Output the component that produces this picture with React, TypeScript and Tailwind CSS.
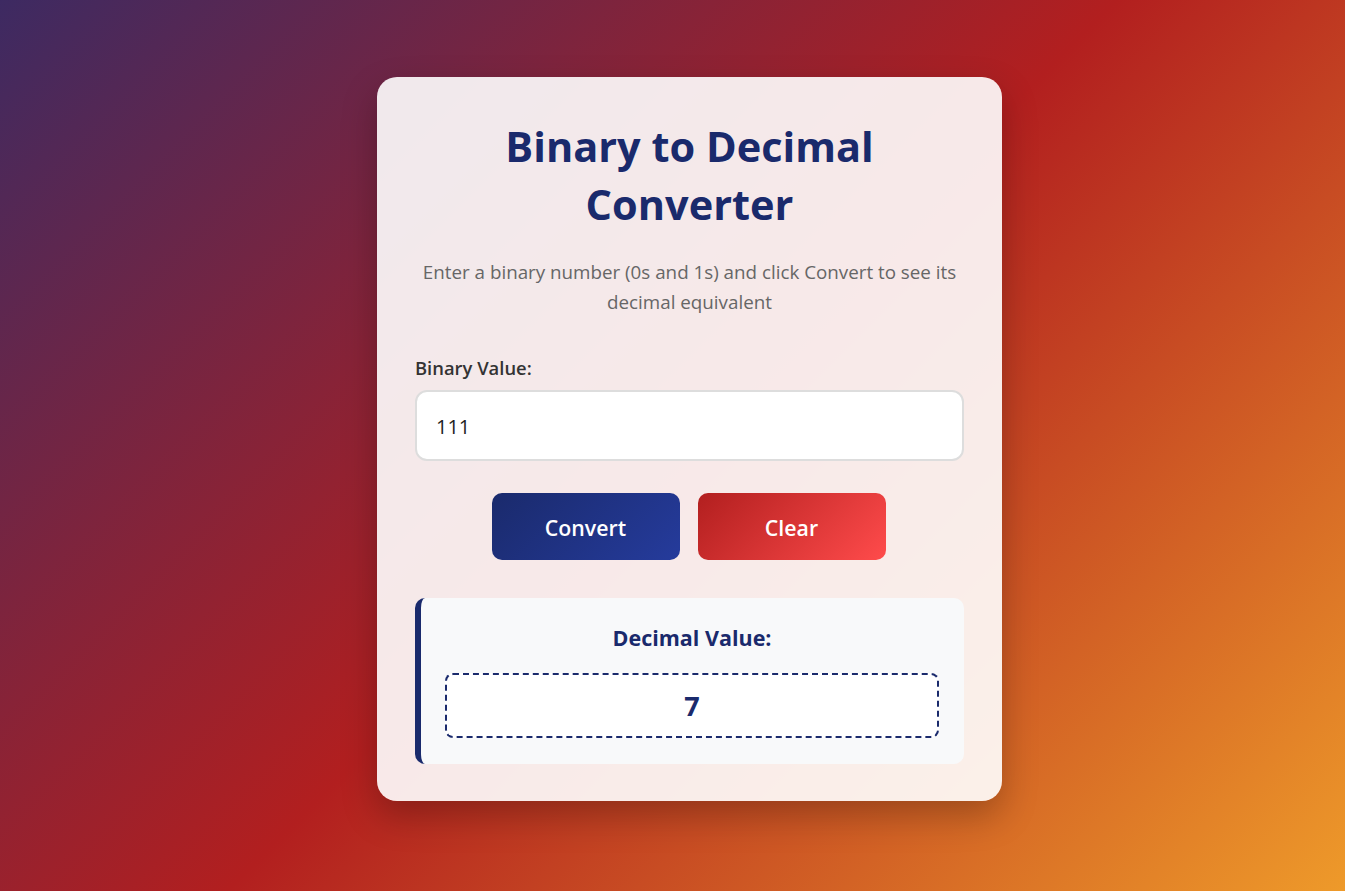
import React, { useState } from "react";

export default function App() {
  const [value, setValue] = useState("111");
  const [result, setResult] = useState("7");

  const convert = () => {
    if (/^[01]+$/.test(value)) setResult(String(parseInt(value, 2)));
    else setResult("Invalid");
  };
  const clear = () => {
    setValue("");
    setResult("");
  };

  return (
    <div
      className="min-h-[891px] w-full bg-[linear-gradient(135deg,#3d2a62_0%,#b21f1f_50%,#ee9a2a_100%)] flex items-start justify-center pt-[77px] pl-[34px]"
      style={{ fontFamily: '"Open Sans", "Noto Sans", sans-serif' }}
    >
      <div className="w-[625px] bg-white/90 rounded-[20px] px-[38px] pt-[40px] pb-[37px] shadow-[0_15px_35px_rgba(0,0,0,0.25)]">
        <h1 className="text-center text-[#1a2a6c] font-bold text-[41.5px] leading-[58px] px-[70px]">
          Binary to Decimal Converter
        </h1>
        <p className="mt-[24px] text-center text-[#666] text-[18.8px] leading-[30px]">
          Enter a binary number (0s and 1s) and click Convert to see its decimal equivalent
        </p>
        <label className="block mt-[37px] text-[#333] font-semibold text-[18.4px] leading-[27px]">
          Binary Value:
        </label>
        <input
          value={value}
          onChange={(e) => setValue(e.target.value)}
          className="mt-[9px] block w-full h-[71px] rounded-[12px] border-2 border-[#ddd] bg-white px-[19px] pt-[2px] text-[20px] text-[#222] outline-none"
        />
        <div className="mt-[32px] flex justify-center gap-[18px] pr-[2px]">
          <button
            onClick={convert}
            className="w-[188px] h-[67px] rounded-[10px] text-white font-semibold text-[21.3px] pt-[2px] bg-[linear-gradient(135deg,#1a2a6c,#253b9c)]"
          >
            Convert
          </button>
          <button
            onClick={clear}
            className="w-[188px] h-[67px] rounded-[10px] text-white font-semibold text-[21.3px] pt-[2px] bg-[linear-gradient(135deg,#b21f1f,#ff4b4b)]"
          >
            Clear
          </button>
        </div>
        <div className="mt-[38px] h-[166px] rounded-[10px] bg-[#f8f9fa] border-l-[6px] border-[#1a2a6c] pl-[24px] pr-[25px] pt-[26px]">
          <h3 className="text-center text-[#1a2a6c] font-bold text-[21.5px] leading-[28px]">
            Decimal Value:
          </h3>
          <div className="mt-[21px] h-[65px] rounded-[8px] border-2 border-dashed border-[#1a2a6c] bg-white flex items-center justify-center pt-[2px] text-[#1a2a6c] font-bold text-[27px]">
            {result}
          </div>
        </div>
      </div>
    </div>
  );
}
